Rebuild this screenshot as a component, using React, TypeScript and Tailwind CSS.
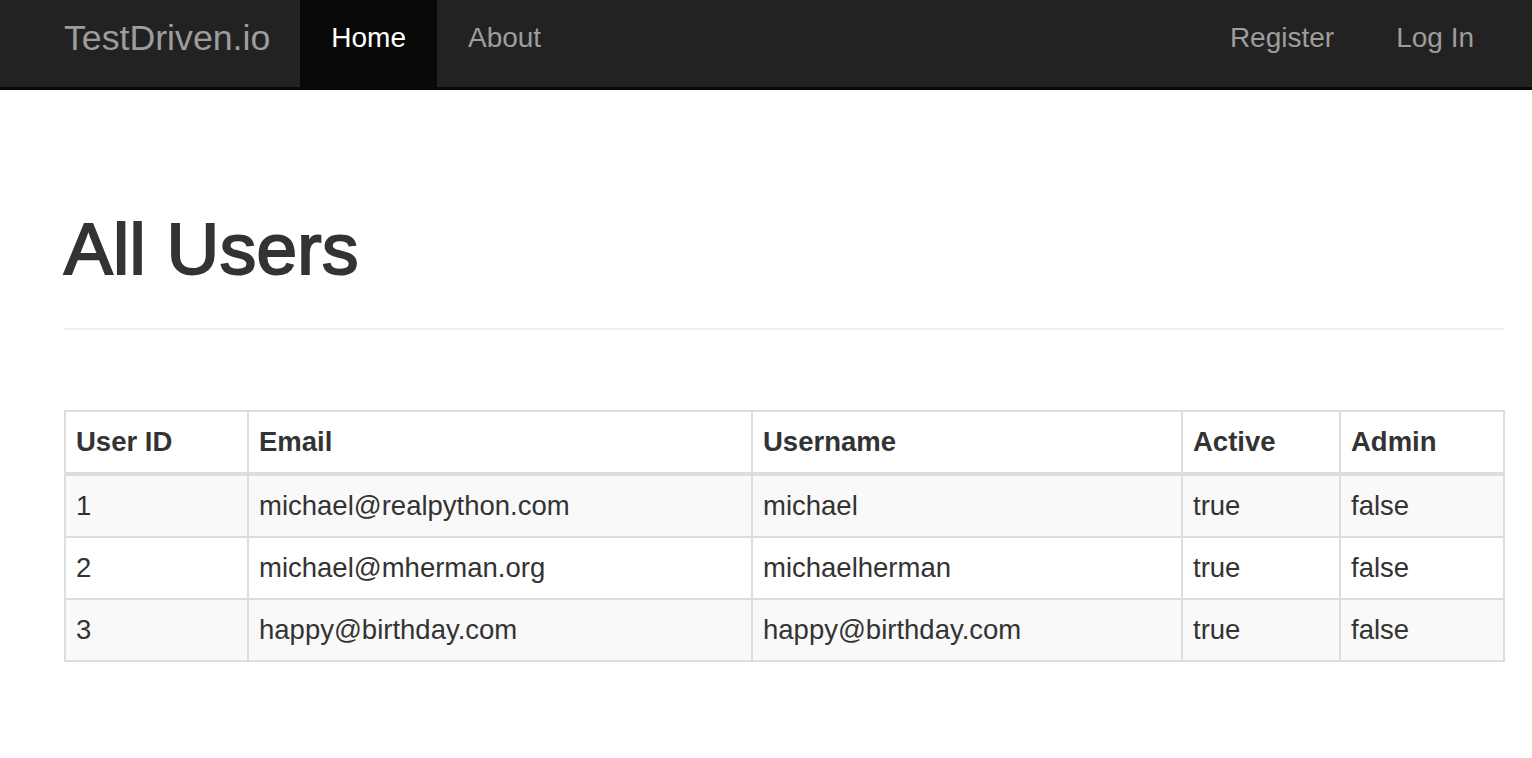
import React from "react";

const users = [
  { id: 1, email: "michael@realpython.com", username: "michael", active: "true", admin: "false" },
  { id: 2, email: "michael@mherman.org", username: "michaelherman", active: "true", admin: "false" },
  { id: 3, email: "happy@birthday.com", username: "happy@birthday.com", active: "true", admin: "false" },
];

export default function App() {
  return (
    <div className="min-h-[758px] bg-white text-[#333]" style={{ fontFamily: '"Liberation Sans", Arial, Helvetica, sans-serif' }}>
      <nav className="bg-[#222] border-b-[3px] border-[#080808]">
        <div className="flex h-[87px] pl-[64px] pr-[27px]">
          <a className="text-[35.7px] leading-[40px] pt-[18px] pr-[30px] text-[#9d9d9d] whitespace-nowrap">TestDriven.io</a>
          <ul className="flex">
            <li className="bg-[#080808] text-white text-[28px] leading-[40px] pt-[18px] px-[31px]">Home</li>
            <li className="text-[#9d9d9d] text-[28px] leading-[40px] pt-[18px] px-[31px]">About</li>
          </ul>
          <div className="flex-1" />
          <ul className="flex">
            <li className="text-[#9d9d9d] text-[28px] leading-[40px] pt-[18px] px-[31px]">Register</li>
            <li className="text-[#9d9d9d] text-[28px] leading-[40px] pt-[18px] px-[31px]">Log In</li>
          </ul>
        </div>
      </nav>
      <div className="pl-[64px] pr-[28px]">
        <h1 className="mt-[119px] text-[73px] leading-[79px] font-normal text-[#333] [-webkit-text-stroke:2px_#333] tracking-[0.3px]">All Users</h1>
        <hr className="mt-[40px] border-0 border-t-2 border-[#eee]" />
        <table className="mt-[80px] w-[1439px] table-fixed border-collapse border-2 border-[#ddd] text-[27.5px] leading-[40px]">
          <colgroup>
            <col className="w-[183px]" />
            <col className="w-[504px]" />
            <col className="w-[430px]" />
            <col className="w-[158px]" />
            <col className="w-[164px]" />
          </colgroup>
          <thead>
            <tr>
              {["User ID", "Email", "Username", "Active", "Admin"].map((h) => (
                <th key={h} className="border-2 border-b-4 border-[#ddd] px-[10px] py-[10px] text-left font-bold">{h}</th>
              ))}
            </tr>
          </thead>
          <tbody>
            {users.map((u, i) => (
              <tr key={u.id} className={i % 2 === 0 ? "bg-[#f9f9f9]" : "bg-white"}>
                <td className="border-2 border-[#ddd] px-[10px] py-[10px]">{u.id}</td>
                <td className="border-2 border-[#ddd] px-[10px] py-[10px]">{u.email}</td>
                <td className="border-2 border-[#ddd] px-[10px] py-[10px]">{u.username}</td>
                <td className="border-2 border-[#ddd] px-[10px] py-[10px]">{u.active}</td>
                <td className="border-2 border-[#ddd] px-[10px] py-[10px]">{u.admin}</td>
              </tr>
            ))}
          </tbody>
        </table>
      </div>
    </div>
  );
}
